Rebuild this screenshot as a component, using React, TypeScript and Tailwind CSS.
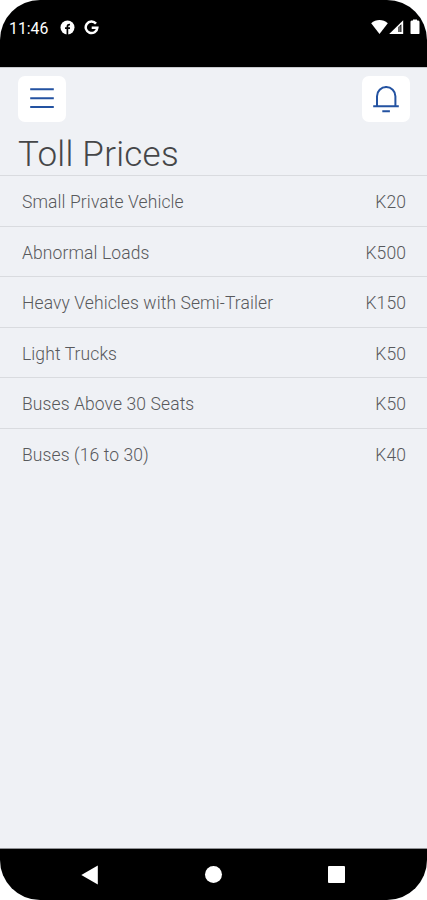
const prices = [
  { name: 'Small Private Vehicle', price: 'K20' },
  { name: 'Abnormal Loads', price: 'K500' },
  { name: 'Heavy Vehicles with Semi-Trailer', price: 'K150' },
  { name: 'Light Trucks', price: 'K50' },
  { name: 'Buses Above 30 Seats', price: 'K50' },
  { name: 'Buses (16 to 30)', price: 'K40' },
];

function StatusBar() {
  return (
    <div className="flex h-[67px] shrink-0 items-start bg-black pt-[19px] pr-[7px] pl-[9px] text-white">
      <span className="w-[51px] pt-px text-[15.8px] leading-[17px] font-normal whitespace-nowrap">11:46</span>
      <svg className="mt-px h-[15px] w-[15px]" viewBox="0 0 15 15">
        <circle cx="7.5" cy="7.5" r="7" fill="white" />
        <path d="M7.4 15V6.7c0-1.5.9-2.3 2.6-2.1M5 8.2h5" stroke="black" strokeWidth="1.7" fill="none" />
      </svg>
      <svg className="mt-px ml-[9px] h-[15px] w-[15px]" viewBox="0 0 15 15">
        <path d="M12 3.6A5.8 5.8 0 1 0 13.3 7.8H7.7" stroke="white" strokeWidth="2.5" fill="none" />
      </svg>
      <svg className="ml-auto h-[16px] w-[17px]" viewBox="0 0 17 16">
        <path d="M.2 4.3C5-.1 12-.1 16.8 4.3L8.5 15z" fill="white" />
      </svg>
      <svg className="ml-[1px] h-[16px] w-[15px]" viewBox="0 0 15 16">
        <path d="M14.2 1.2V15H.2z" fill="white" />
        <path d="M9.4 8l3-2.8V13h-3z" fill="black" />
        <path d="M10.9 7.2V13" stroke="white" strokeWidth=".7" />
      </svg>
      <svg className="ml-[6px] h-[16px] w-[10px]" viewBox="0 0 10 16">
        <path d="M3 .5h4V1.5h1.5l1 1v12l-.5.5H1l-.5-.5v-12l1-1H3z" fill="white" />
      </svg>
    </div>
  );
}

function Header() {
  return (
    <header className="flex h-[56px] shrink-0 items-start justify-between pt-[8px] pr-[17px] pl-[18px]">
      <button aria-label="Menu" className="flex h-[46px] w-[48px] items-center justify-center rounded-[7px] bg-white">
        <svg className="h-[24px] w-[26px]" viewBox="0 0 26 24" stroke="#2352a1" strokeWidth="2">
          <path d="M1.2 2.2h23.6M1.2 11.2h23.6M1.2 20.1h23.6" />
        </svg>
      </button>
      <button aria-label="Notifications" className="flex h-[46px] w-[48px] items-center justify-center rounded-[7px] bg-white">
        <svg className="h-[30px] w-[28px]" viewBox="0 0 28 30" stroke="#2352a1" strokeWidth="2" fill="none">
          <path d="M1.2 22.3h25.6M5 22.3V12.3a9.2 9.2 0 0 1 18.4 0v10M14.2 3.3V1.9M10.3 27.3h7.6" />
        </svg>
      </button>
    </header>
  );
}

function NavigationBar() {
  return (
    <nav className="flex h-[51px] shrink-0 items-center justify-between bg-black pr-[82px] pl-[81px]">
      <svg className="h-[20px] w-[17px]" viewBox="0 0 17 20">
        <path d="M.3 10L16.8.5v19z" fill="white" />
      </svg>
      <span className="mr-[-1px] h-[17px] w-[17px] rounded-full bg-white" />
      <span className="h-[17px] w-[17px] rounded-[1px] bg-white" />
    </nav>
  );
}

export default function App() {
  return (
    <div className="h-[900px] w-[427px] bg-white font-['Roboto',sans-serif]">
      <div className="flex h-full flex-col overflow-hidden rounded-[40px] bg-[#eff1f5]">
        <StatusBar />
        <div className="flex flex-1 flex-col border-t border-b border-t-[#c8c9cd] border-b-[#909195]">
          <Header />
          <h1 className="h-[51px] pl-[18px] text-[35px] leading-[61px] font-light tracking-[0.25px] whitespace-nowrap text-[#454648]">Toll Prices</h1>
          <ul>
            {prices.map((item) => (
              <li key={item.name} className="flex h-[50.5px] items-center justify-between border-t border-[#d9dbdf] pt-[3px] pr-[21px] pl-[22px] text-[17.5px] font-light tracking-[0.1px] whitespace-nowrap text-[#58595c]">
                <span>{item.name}</span>
                <span>{item.price}</span>
              </li>
            ))}
          </ul>
        </div>
        <NavigationBar />
      </div>
    </div>
  );
}
